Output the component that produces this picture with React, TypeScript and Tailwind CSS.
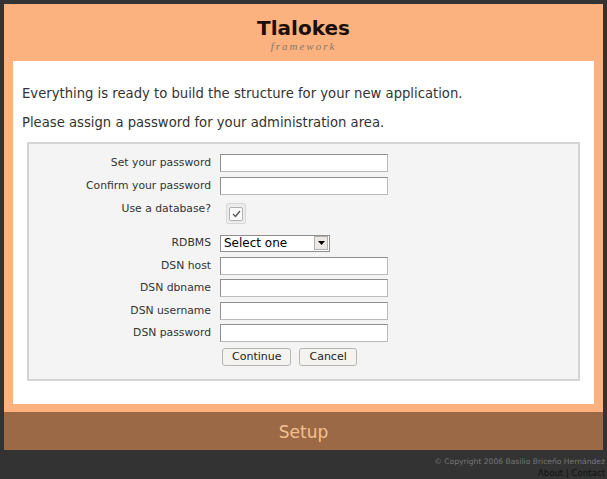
import React from "react";

const Row = ({ label, children }: { label: string; children: React.ReactNode }) => (
  <div className="flex items-center h-[22.5px]">
    <div className="w-[191px] text-right pr-[9px] text-[10.8px] text-[#333]">{label}</div>
    <div className="flex items-center">{children}</div>
  </div>
);

const Input = () => (
  <div className="w-[168px] h-[18px] bg-white border border-[#8f8f8f] border-b-[#bbb] border-r-[#bbb]" />
);

export default function App() {
  return (
    <div className="w-[607px] h-[479px] bg-[#333333] flex flex-col" style={{ fontFamily: '"DejaVu Sans", Verdana, sans-serif' }}>
      <div className="mx-[4px] mt-[4px] bg-[#fbb27f] flex flex-col px-[9px] pb-[8px]">
        <div className="h-[57px] flex flex-col items-center pt-[12px]">
          <div className="text-[20px] font-bold leading-[24px] text-[#1c0d08]">Tlalokes</div>
          <div className="text-[11px] italic leading-[12px] tracking-[2px] text-[#8a7768]" style={{ fontFamily: '"Liberation Serif", serif' }}>framework</div>
        </div>
        <div className="bg-white h-[343px] pt-[25px] px-[9px]">
          <div className="text-[13.2px] text-[#333] leading-[16px]">Everything is ready to build the structure for your new application.</div>
          <div className="text-[13.2px] text-[#333] leading-[16px] mt-[13px]">Please assign a password for your administration area.</div>
          <div className="mt-[11px] mx-[5px] border-2 border-[#d4d4d4] bg-[#f4f4f4] h-[239px] pt-[8px]">
            <Row label="Set your password"><Input /></Row>
            <Row label="Confirm your password"><Input /></Row>
            <div className="flex h-[35px]">
              <div className="w-[191px] text-right pr-[9px] text-[10.8px] text-[#333] pt-[4px]">Use a database?</div>
              <div className="pl-[6px] pt-[6px]">
                <div className="w-[20px] h-[21px] border border-[#d8d8d8] rounded-[2px] bg-[#ececec] flex items-center justify-center">
                  <div className="w-[14px] h-[14px] border border-[#b0b0b0] rounded-[2px] bg-[#fbfbfb] flex items-center justify-center">
                    <svg width="9" height="8" viewBox="0 0 9 8"><path d="M1 4 L3.5 6.5 L8 1" fill="none" stroke="#555" strokeWidth="1.4" /></svg>
                  </div>
                </div>
              </div>
            </div>
            <Row label="RDBMS">
              <div className="w-[110px] h-[17px] bg-white border border-[#8f8f8f] flex items-center justify-between">
                <span className="text-[12px] text-black pl-[3px] leading-[14px]">Select one</span>
                <div className="w-[14px] h-[14px] bg-[#ece9e4] border border-[#b0b0b0] mr-[1px] flex items-center justify-center">
                  <svg width="7" height="4" viewBox="0 0 7 4"><path d="M0 0 H7 L3.5 4 Z" fill="#000" /></svg>
                </div>
              </div>
            </Row>
            <Row label="DSN host"><Input /></Row>
            <Row label="DSN dbname"><Input /></Row>
            <Row label="DSN username"><Input /></Row>
            <Row label="DSN password"><Input /></Row>
            <div className="flex h-[24px] items-center pl-[193px] gap-[8px]">
              <button className="h-[18px] px-[9px] text-[11px] text-[#222] bg-[#f4f3ef] border border-[#b5b5b5] rounded-[3px] leading-[14px]">Continue</button>
              <button className="h-[18px] px-[9px] text-[11px] text-[#222] bg-[#f4f3ef] border border-[#b5b5b5] rounded-[3px] leading-[14px]">Cancel</button>
            </div>
          </div>
        </div>
      </div>
      <div className="mx-[4px] h-[40px] bg-[#9b6946] flex items-center justify-center pt-[3px]">
        <span className="text-[17px] text-[#f6c08e]">Setup</span>
      </div>
      <div className="flex flex-col items-end pr-[2px] pt-[7px]">
        <div className="text-[7.6px] text-[#777] leading-[10px]">© Copyright 2006 Basilio Briceño Hernández</div>
        <div className="text-[8.6px] text-[#111] leading-[12px]">About | Contact</div>
      </div>
    </div>
  );
}
